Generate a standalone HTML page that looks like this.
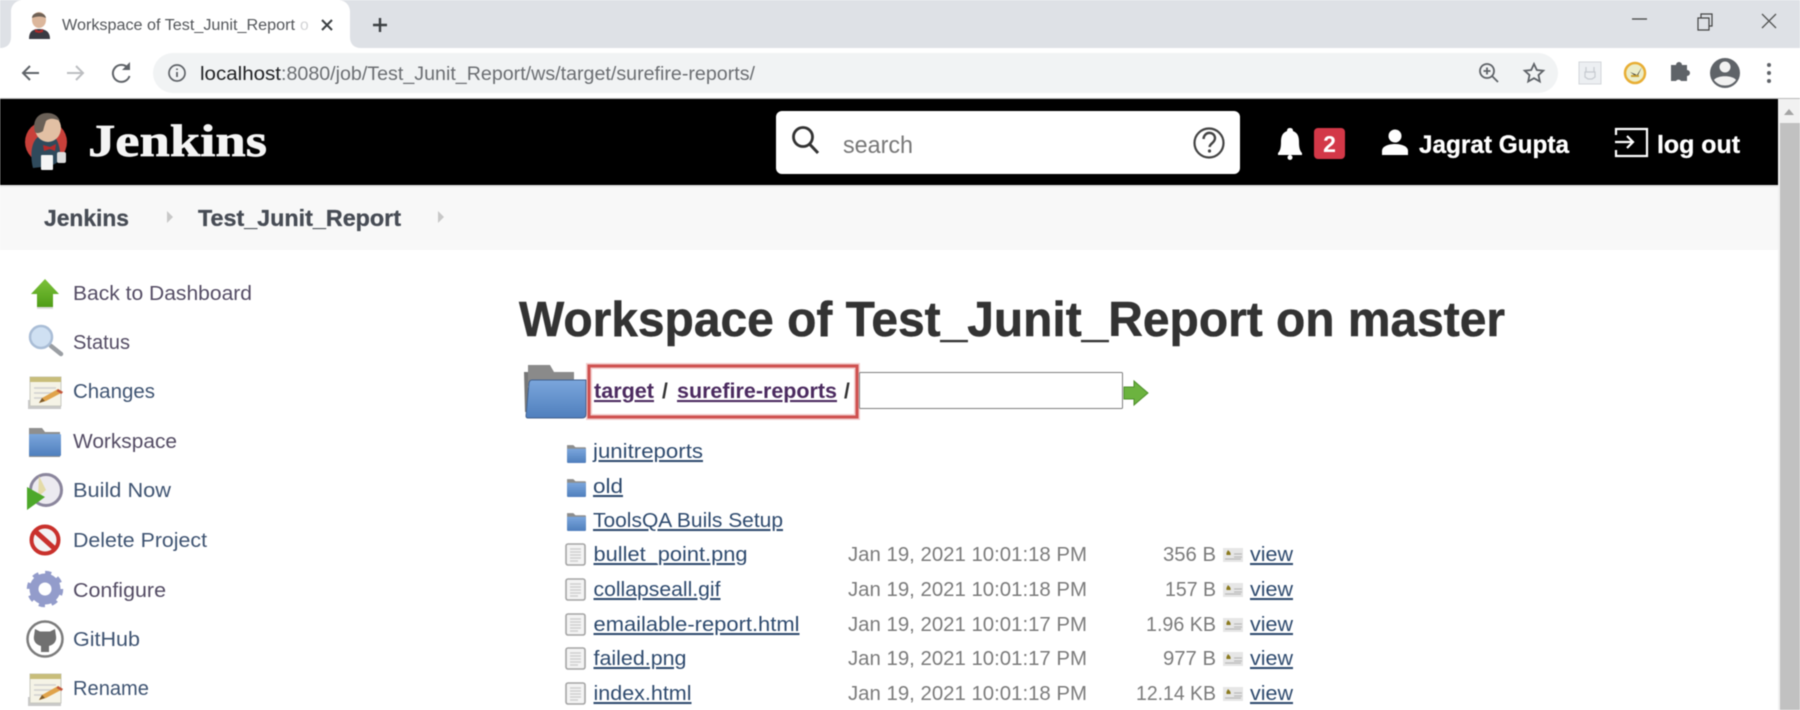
<!DOCTYPE html>
<html><head><meta charset="utf-8"><title>Workspace of Test_Junit_Report on master</title>
<style>
html,body{margin:0;padding:0;background:#fff;width:1800px;height:710px;overflow:hidden}
svg{display:block;filter:blur(.4px)}
text{font-family:"Liberation Sans",sans-serif}
.side{font-size:20.5px;fill:#3f5472}
.vis{font-size:20.5px;fill:#544c64}
.lnk{font-size:20.5px;fill:#2e4a6e;text-decoration:underline}
.gr{font-size:20.5px;fill:#7b7b7b}
.hd{font-size:25px;font-weight:bold;fill:#fff;stroke:#fff;stroke-width:.3px}
.bc{font-size:23px;font-weight:bold;fill:#474c55;stroke:#474c55;stroke-width:.3px}
.pur{font-size:21px;font-weight:bold;fill:#4b2a5f;text-decoration:underline}
</style></head><body>
<svg width="1800" height="710" viewBox="0 0 1800 710" xmlns="http://www.w3.org/2000/svg">
<defs>
<linearGradient id="fb" x1="0" y1="0" x2="0" y2="1"><stop offset="0" stop-color="#7ba6dc"/><stop offset="1" stop-color="#4f7fbd"/></linearGradient>
<linearGradient id="gr" x1="0" y1="0" x2="0" y2="1"><stop offset="0" stop-color="#7cc23a"/><stop offset="1" stop-color="#4f9d17"/></linearGradient>
<symbol id="sf" viewBox="0 0 20 20"><path d="M1 2h6l2 2h9a1 1 0 0 1 1 1v13a1 1 0 0 1-1 1H2a1 1 0 0 1-1-1z" fill="#8d8d8d"/><path d="M1 5.500h18V18a1 1 0 0 1-1 1H2a1 1 0 0 1-1-1z" fill="url(#fb)"/></symbol>
<symbol id="file" viewBox="0 0 21 23"><rect x="1" y="1" width="19" height="21" rx="2" fill="#f4f4f4" stroke="#a4a4a4" stroke-width="1.6"/><path d="M5 6h11M5 9h11M5 12h11M5 15h11M5 18h8" stroke="#cfcfcf" stroke-width="1.400"/></symbol>
<symbol id="vw" viewBox="0 0 20 17"><rect x="0" y="2" width="20" height="14" fill="#e6e6e6"/><path d="M11 8h8M11 11h8M2 13h16" stroke="#bbb" stroke-width="1.300"/><path d="M5 4c2 2 3 3 2.600 5H3.600C3 7 4 6 5 4z" fill="#8b7a1e"/></symbol>
<symbol id="note" viewBox="0 0 36 34"><rect x="1" y="24" width="33" height="9" fill="#c9c9c9"/><rect x="3" y="1" width="31" height="29" fill="#f5f3e6" stroke="#c8c8c0"/><rect x="3" y="1" width="31" height="5" fill="#c8bd7a"/><path d="M7 12h22M7 17h22M7 22h12" stroke="#d0d0d0" stroke-width="1.500"/><path d="M12 27l3-5 16-9 5 3-17 9z" fill="#e0a34a"/><path d="M12 27l3-5 3 3z" fill="#7c5a2a"/><path d="M31 13l5 3-1.500 2-5-3z" fill="#c2553c"/></symbol>
</defs>

<!-- tab strip -->
<rect width="1800" height="48" fill="#dee1e6"/>
<path d="M0 48c7 0 11-4 11-11V12C11 5 16 0 23 0h315c7 0 12 5 12 12v25c0 7 4 11 11 11z" fill="#fff"/>
<!-- favicon -->
<ellipse cx="39" cy="20" rx="7" ry="8" fill="#dcb79c"/><path d="M32 18c0-7 13-7 14 0-4-2-9-2-14 0z" fill="#6e6156"/><path d="M29 39c0-7 3-10 10-10s11 3 11 10z" fill="#3a3a42"/><path d="M35 29l4 2 4-2v3l-4 1-4-1z" fill="#b02a2a"/>
<text x="62" y="30" font-size="15.500" fill="#53565a" textLength="233" lengthAdjust="spacingAndGlyphs">Workspace of Test_Junit_Report</text>
<text x="300" y="30" font-size="15.500" fill="#d2d3d5">o</text>
<path d="M322 20l10 10M332 20l-10 10" stroke="#3c4043" stroke-width="2"/>
<path d="M380 18v14M373 25h14" stroke="#3c4043" stroke-width="2.400"/>
<path d="M1632 19h15" stroke="#444" stroke-width="1.300"/>
<path d="M1698 18h11v12h-11zM1701 18v-4h11v12h-3" fill="none" stroke="#444" stroke-width="1.200"/>
<path d="M1762 14l14 14M1776 14l-14 14" stroke="#555" stroke-width="1.300"/>

<!-- toolbar -->
<rect y="48" width="1800" height="50" fill="#fff"/>
<rect y="98" width="1800" height="1" fill="#b9b9b9"/>
<path d="M39 73H23M30 66l-7 7 7 7" fill="none" stroke="#5f6368" stroke-width="2"/>
<path d="M67 73h16M76 66l7 7-7 7" fill="none" stroke="#bcbec1" stroke-width="2"/>
<path d="M128 68a8.500 8.500 0 1 0 1.500 8" fill="none" stroke="#5f6368" stroke-width="2"/><path d="M130 62v8h-8z" fill="#5f6368"/>
<rect x="153" y="53" width="1405" height="40" rx="20" fill="#f1f3f4"/>
<circle cx="177" cy="73" r="8" fill="none" stroke="#5f6368" stroke-width="1.700"/><path d="M177 72v5M177 68.500v1.500" stroke="#5f6368" stroke-width="1.800"/>
<text x="200" y="80" font-size="19px" textLength="81" lengthAdjust="spacingAndGlyphs" fill="#202124">localhost</text>
<text x="281" y="80" font-size="19px" textLength="474" lengthAdjust="spacingAndGlyphs" fill="#6b6e72">:8080/job/Test_Junit_Report/ws/target/surefire-reports/</text>
<circle cx="1487" cy="71" r="7" fill="none" stroke="#5f6368" stroke-width="1.800"/><path d="M1492 76l6 6M1487 67.500v7M1483.500 71h7" stroke="#5f6368" stroke-width="1.800"/>
<path d="M1534 64l2.800 6 6.500.7-4.800 4.400 1.300 6.400-5.800-3.300-5.800 3.300 1.300-6.400-4.800-4.400 6.500-.7z" fill="none" stroke="#5f6368" stroke-width="1.800"/>
<rect x="1579" y="62" width="22" height="22" fill="#eceff2" stroke="#d3d6da"/><path d="M1586 67v5M1594 67v5M1585 72h10v5l-3 2h-4l-3-2z" fill="none" stroke="#c6cad0" stroke-width="1.200"/>
<circle cx="1635" cy="73" r="10" fill="#ecedc8" stroke="#e8ae34" stroke-width="2.500"/><path d="M1630 72l7 5 5-10-5 8z" fill="#333"/><path d="M1631 76h8" stroke="#c8a030" stroke-width="2"/>
<path d="M1671 68h5a3 3 0 0 1 6 0h5v5a3 3 0 0 1 0 6v5h-6a3 3 0 0 0-5 0h-5z" fill="#5f6368" transform="translate(0 -3)"/>
<circle cx="1725" cy="73" r="15" fill="#5f6368"/><circle cx="1725" cy="67" r="5.500" fill="#f1f1f1"/><path d="M1714 80c3-5 19-5 22 0-3 4-7 5.500-11 5.500s-8-1.500-11-5.500z" fill="#f1f1f1"/>
<circle cx="1769" cy="65" r="2" fill="#5f6368"/><circle cx="1769" cy="73" r="2" fill="#5f6368"/><circle cx="1769" cy="81" r="2" fill="#5f6368"/>

<!-- scrollbar -->
<rect x="1778" y="99" width="22" height="611" fill="#f1f1f1"/>
<rect x="1780" y="123" width="20" height="587" fill="#c1c1c1"/>
<path d="M1789 109l5 6h-10z" fill="#a3a3a3"/>

<!-- header -->
<rect y="99" width="1778" height="86" fill="#000"/>
<circle cx="46" cy="142" r="21" fill="#c8403a"/>
<path d="M33 168c-3-12-2-26 5-31l8 3 9-3c4 6 6 14 5 24l-9 5z" fill="#2f4a5c"/>
<ellipse cx="48" cy="128" rx="13" ry="14" fill="#e2c0a4"/>
<path d="M35 132c-3-10 2-19 12-19 7 0 11 3 13 8-6-3-11-3-14 0-1 3-2 6-3 10-3 2-6 3-8 1z" fill="#6a6057"/>
<path d="M43 145l7 2 6-3-1 7-5-2-6 2z" fill="#b52b2b"/>
<rect x="41" y="155" width="12" height="15" rx="1" fill="#f5f5f5"/>
<rect x="57" y="152" width="9" height="11" rx="2" fill="#ddd"/>
<text x="88" y="156" style="font-family:'Liberation Serif',serif;stroke:#f4f4f4;stroke-width:.7px" font-size="45" font-weight="bold" fill="#f4f4f4" textLength="179" lengthAdjust="spacingAndGlyphs">Jenkins</text>

<rect x="776" y="111" width="464" height="63" rx="6" fill="#fff"/>
<circle cx="803" cy="137" r="9.500" fill="none" stroke="#333" stroke-width="2.800"/><path d="M809.500 144l8.500 9" stroke="#333" stroke-width="3"/>
<text x="843" y="153" font-size="24" fill="#787878" textLength="70" lengthAdjust="spacingAndGlyphs">search</text>
<circle cx="1209" cy="143" r="14.500" fill="none" stroke="#444" stroke-width="2.200"/>
<path d="M1203.500 139c.5-8 11-8 11.500-1 0 5-5 5-5.500 9" fill="none" stroke="#444" stroke-width="2.400"/><circle cx="1209.500" cy="151" r="1.600" fill="#444"/>

<path d="M1290 128c-2 0-3 1-3 3-5 2-6 6-6 11 0 6-1 9-3 11v2h24v-2c-2-2-3-5-3-11 0-5-1-9-6-11 0-2-1-3-3-3z" fill="#fff"/><circle cx="1290" cy="157.500" r="2.500" fill="#fff"/>
<rect x="1314" y="128" width="31" height="31" rx="4" fill="#d33848"/>
<text x="1329.500" y="152" font-size="23" font-weight="bold" fill="#fff" text-anchor="middle">2</text>
<circle cx="1395" cy="136" r="6.500" fill="#fff"/><path d="M1382 155v-4c0-5 7-7 13-7s13 2 13 7v4z" fill="#fff"/>
<text x="1419" y="153" class="hd" textLength="150" lengthAdjust="spacingAndGlyphs">Jagrat Gupta</text>
<path d="M1616 135v-6h31v27h-31v-6" fill="none" stroke="#fff" stroke-width="2.200"/><path d="M1615 142h18M1627 136l6 6-6 6" fill="none" stroke="#fff" stroke-width="2.200"/>
<text x="1657" y="153" class="hd" textLength="83" lengthAdjust="spacingAndGlyphs">log out</text>

<!-- breadcrumb -->
<rect y="185" width="1778" height="2" fill="#e9e9e9"/>
<rect y="187" width="1778" height="63" fill="#f8f8f8"/>
<text x="44" y="226" class="bc" textLength="85" lengthAdjust="spacingAndGlyphs">Jenkins</text>
<path d="M167 211l6 6-6 6z" fill="#c8c8c8"/>
<text x="198" y="226" class="bc" textLength="203" lengthAdjust="spacingAndGlyphs">Test_Junit_Report</text>
<path d="M438 211l6 6-6 6z" fill="#c8c8c8"/>

<!-- side -->
<path d="M45 279l14 15h-6v13H37v-13h-6z" fill="url(#gr)"/><rect x="37" y="307" width="16" height="2" fill="#dcdcdc"/>
<text x="73" y="300" class="vis" textLength="179" lengthAdjust="spacingAndGlyphs">Back to Dashboard</text>
<path d="M51 346l10 8" stroke="#9a9ea3" stroke-width="4.500" stroke-linecap="round"/><circle cx="41" cy="337" r="11" fill="#cfe0f2" stroke="#a9bdd6" stroke-width="2.500"/>
<text x="73" y="349" class="vis" textLength="57" lengthAdjust="spacingAndGlyphs">Status</text>
<use href="#note" x="27" y="376" width="36" height="34"/>
<text x="73" y="398" class="side" textLength="82" lengthAdjust="spacingAndGlyphs">Changes</text>
<path d="M29 428h13l3 4h15v25H29z" fill="#8f8f8f"/><rect x="29" y="434" width="32" height="22" rx="1" fill="url(#fb)"/>
<text x="73" y="448" class="vis" textLength="104" lengthAdjust="spacingAndGlyphs">Workspace</text>
<circle cx="46" cy="490" r="15.500" fill="#eceaf0" stroke="#8a859c" stroke-width="3"/><path d="M39 476l7 14-8 7z" fill="#e4dba8"/><path d="M27 487l18 10-18 13z" fill="#4da82a"/>
<text x="73" y="497" class="side" textLength="98" lengthAdjust="spacingAndGlyphs">Build Now</text>
<circle cx="45" cy="540" r="13.500" fill="#f3f3f3" stroke="#c9312c" stroke-width="4"/><path d="M35 531l20 18" stroke="#c9312c" stroke-width="5"/>
<text x="73" y="547" class="side" textLength="134" lengthAdjust="spacingAndGlyphs">Delete Project</text>
<circle cx="45" cy="589" r="11" fill="none" stroke="#939ccb" stroke-width="9"/><circle cx="45" cy="589" r="16" fill="none" stroke="#939ccb" stroke-width="4.500" stroke-dasharray="6 6.570"/>
<text x="73" y="597" class="vis" textLength="93" lengthAdjust="spacingAndGlyphs">Configure</text>
<circle cx="45" cy="639" r="17.500" fill="#fff" stroke="#7c7c7c" stroke-width="2.500"/><path d="M35 629l5 2.500h10l5-2.500 1 7c1 6-3 9-7 10v6h-8v-6c-4-1-8-4-7-10z" fill="#707070"/>
<text x="73" y="646" class="side" textLength="67" lengthAdjust="spacingAndGlyphs">GitHub</text>
<use href="#note" x="27" y="673" width="36" height="34"/>
<text x="73" y="695" class="side" textLength="76" lengthAdjust="spacingAndGlyphs">Rename</text>

<!-- main -->
<text x="519" y="336" font-size="49" font-weight="bold" fill="#333" stroke="#333" stroke-width=".5" textLength="986" lengthAdjust="spacingAndGlyphs">Workspace of Test_Junit_Report on master</text>
<path d="M528 365h22l4 7h20v14h-46z" fill="#8a8a8a"/><path d="M528 372v40h-3l-1-40z" fill="#777"/>
<path d="M526 416l3-33q.5-3 3-3h54v34q0 4-4 4h-54q-2 0-2-2z" fill="url(#fb)" stroke="#41618e"/>
<rect x="589" y="366" width="268" height="51" fill="none" stroke="#cf5150" stroke-opacity=".3" stroke-width="6"/>
<rect x="589" y="366" width="268" height="51" fill="none" stroke="#cf5150" stroke-width="3"/>
<text x="594" y="398" class="pur" textLength="60" lengthAdjust="spacingAndGlyphs">target</text>
<text x="662" y="398" font-size="21" font-weight="bold" fill="#333">/</text>
<text x="677" y="398" class="pur" textLength="160" lengthAdjust="spacingAndGlyphs">surefire-reports</text>
<text x="844" y="398" font-size="21" font-weight="bold" fill="#333">/</text>
<rect x="859.500" y="372.500" width="263" height="36" rx="1" fill="#fff" stroke="#7f7f7f"/>
<path d="M1124 387h10v-6l14 12-14 12v-6h-10z" fill="#6cb33f" stroke="#4d8f2a"/>

<use href="#sf" x="566" y="443" width="21" height="21"/>
<text x="593" y="458" class="lnk" textLength="110" lengthAdjust="spacingAndGlyphs">junitreports</text>
<use href="#sf" x="566" y="477" width="21" height="21"/>
<text x="593" y="493" class="lnk" textLength="30" lengthAdjust="spacingAndGlyphs">old</text>
<use href="#sf" x="566" y="511" width="21" height="21"/>
<text x="593" y="527" class="lnk" textLength="190" lengthAdjust="spacingAndGlyphs">ToolsQA Buils Setup</text>

<use href="#file" x="565" y="543" width="21" height="23"/>
<text x="593.500" y="561" class="lnk" textLength="154" lengthAdjust="spacingAndGlyphs">bullet_point.png</text>
<text x="848" y="561" class="gr" textLength="239" lengthAdjust="spacingAndGlyphs">Jan 19, 2021 10:01:18 PM</text>
<text x="1163" y="561" class="gr" textLength="53" lengthAdjust="spacingAndGlyphs">356 B</text>
<use href="#vw" x="1223" y="546" width="20" height="17"/>
<text x="1250" y="561" class="lnk" textLength="43" lengthAdjust="spacingAndGlyphs">view</text>

<use href="#file" x="565" y="578" width="21" height="23"/>
<text x="593.500" y="596" class="lnk" textLength="127" lengthAdjust="spacingAndGlyphs">collapseall.gif</text>
<text x="848" y="596" class="gr" textLength="239" lengthAdjust="spacingAndGlyphs">Jan 19, 2021 10:01:18 PM</text>
<text x="1165" y="596" class="gr" textLength="51" lengthAdjust="spacingAndGlyphs">157 B</text>
<use href="#vw" x="1223" y="581" width="20" height="17"/>
<text x="1250" y="596" class="lnk" textLength="43" lengthAdjust="spacingAndGlyphs">view</text>

<use href="#file" x="565" y="613" width="21" height="23"/>
<text x="593.500" y="631" class="lnk" textLength="206" lengthAdjust="spacingAndGlyphs">emailable-report.html</text>
<text x="848" y="631" class="gr" textLength="239" lengthAdjust="spacingAndGlyphs">Jan 19, 2021 10:01:17 PM</text>
<text x="1146" y="631" class="gr" textLength="70" lengthAdjust="spacingAndGlyphs">1.96 KB</text>
<use href="#vw" x="1223" y="616" width="20" height="17"/>
<text x="1250" y="631" class="lnk" textLength="43" lengthAdjust="spacingAndGlyphs">view</text>

<use href="#file" x="565" y="647" width="21" height="23"/>
<text x="593.500" y="665" class="lnk" textLength="93" lengthAdjust="spacingAndGlyphs">failed.png</text>
<text x="848" y="665" class="gr" textLength="239" lengthAdjust="spacingAndGlyphs">Jan 19, 2021 10:01:17 PM</text>
<text x="1163" y="665" class="gr" textLength="53" lengthAdjust="spacingAndGlyphs">977 B</text>
<use href="#vw" x="1223" y="650" width="20" height="17"/>
<text x="1250" y="665" class="lnk" textLength="43" lengthAdjust="spacingAndGlyphs">view</text>

<use href="#file" x="565" y="682" width="21" height="23"/>
<text x="593.500" y="700" class="lnk" textLength="98" lengthAdjust="spacingAndGlyphs">index.html</text>
<text x="848" y="700" class="gr" textLength="239" lengthAdjust="spacingAndGlyphs">Jan 19, 2021 10:01:18 PM</text>
<text x="1136" y="700" class="gr" textLength="80" lengthAdjust="spacingAndGlyphs">12.14 KB</text>
<use href="#vw" x="1223" y="685" width="20" height="17"/>
<text x="1250" y="700" class="lnk" textLength="43" lengthAdjust="spacingAndGlyphs">view</text>
</svg>
</body></html>
